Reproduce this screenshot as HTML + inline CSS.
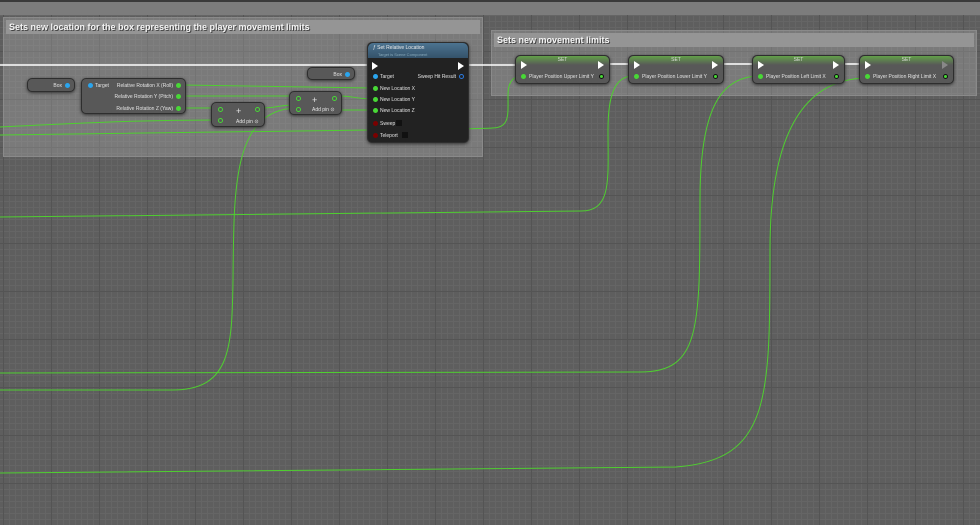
<!DOCTYPE html>
<html><head><meta charset="utf-8"><style>
*{margin:0;padding:0;box-sizing:border-box}
body{width:980px;height:525px;overflow:hidden;position:relative;font-family:"Liberation Sans",sans-serif;
background-color:#5e5e5e;
background-image:linear-gradient(to right,#545454 1px,transparent 1px),linear-gradient(to bottom,#545454 1px,transparent 1px),linear-gradient(to right,#656565 1px,transparent 1px),linear-gradient(to bottom,#656565 1px,transparent 1px);
background-size:48px 48px,48px 48px,6px 6px,6px 6px;background-position:3px 3px,3px 3px,3px 3px,3px 3px}
.topdark{position:absolute;left:0;top:0;width:980px;height:2px;background:#3a3a3a}
.topband{position:absolute;left:0;top:2px;width:980px;height:13px;background:#7c7c7c}
.cmt{position:absolute;background:rgba(190,190,190,.3);border:1px solid #8a8a8a}
.cmt .t{position:absolute;left:2px;right:2px;top:2px;height:14px;background:#959595;color:#f4f4f4;font-size:9px;font-weight:bold;line-height:14px;padding-left:3px;text-shadow:1px 1px 0 #444}
.node{position:absolute;background:#585858;border:1px solid #2e2e2e;border-radius:5px;box-shadow:0 1px 3px #333;color:#ddd;font-size:5px;}
.pin{position:absolute;width:5px;height:5px;border-radius:50%}
.g{background:#48d836}.b{background:#2aa5ee}
.lbl{position:absolute;white-space:nowrap;font-size:5px;color:#e4e4e4}
.exec{position:absolute;width:0;height:0;border-left:6px solid #fff;border-top:4px solid transparent;border-bottom:4px solid transparent}
.set .hd{position:absolute;left:0;right:0;top:0;height:9px;border-radius:5px 5px 0 0;background:linear-gradient(#62a048,#585858);text-align:center;color:#ddd;font-size:5px;line-height:9px}
</style></head><body>
<div class="topdark"></div><div class="topband"></div>
<div class="cmt" style="left:3px;top:17px;width:480px;height:140px"><div class="t">Sets new location for the box representing the player movement limits</div></div>
<div class="cmt" style="left:491px;top:30px;width:486px;height:66px"><div class="t">Sets new movement limits</div></div>

<svg width="980" height="525" style="position:absolute;left:0;top:0" fill="none">
<g stroke="#fff" stroke-width="1.5">
<path d="M0 65 L370 65"/><path d="M462 65 L520 65"/>
<path d="M604 64 L632 64"/><path d="M717 64 L760 64"/><path d="M840 64 L868 64"/>
</g>
<g stroke="#4fcf30" stroke-width="1">
<path d="M0 127 C100 122 150 120 217 120"/>
<path d="M0 135 C200 133 300 131 370 130 C420 129 480 129 492 128"/>
<path d="M182 85 L370 88"/>
<path d="M182 96 L290 96"/>
<path d="M182 108 L217 108"/>
<path d="M263 108 C275 108 280 105 296 105"/>
<path d="M340 96 C355 96 355 99 372 99"/>
<path d="M340 110 L372 110"/>
<path d="M0 390 L172 390 C230 390 232 350 233 280 C234 190 232 110 296 108"/>
<path d="M0 217 L581 211 C612 211 608 180 608 130 C608 95 615 76 633 76"/>
<path d="M492 128 C510 128 508 115 508 95 C508 80 515 76 522 76"/>
<path d="M0 373 L640 372 C700 372 700 330 700 200 C700 110 720 76 760 76"/>
<path d="M0 473 L676 467 C770 460 770 400 770 250 C770 140 800 78 868 78"/>
</g>
</svg>

<div class="node" style="left:27px;top:78px;width:48px;height:14px"><span class="lbl" style="right:12px;top:4px">Box</span><div class="pin b" style="right:4px;top:4px"></div></div>
<div class="node" style="left:81px;top:78px;width:105px;height:36px"><div class="pin b" style="left:6px;top:4px"></div><span class="lbl" style="left:13px;top:4px">Target</span>
<span class="lbl" style="right:12px;top:4px">Relative Rotation X (Roll)</span><div class="pin g" style="right:4px;top:4px"></div>
<span class="lbl" style="right:12px;top:15px">Relative Rotation Y (Pitch)</span><div class="pin g" style="right:4px;top:15px"></div>
<span class="lbl" style="right:12px;top:27px">Relative Rotation Z (Yaw)</span><div class="pin g" style="right:4px;top:27px"></div></div>
<div class="node" style="left:211px;top:102px;width:54px;height:25px"><div class="pin g" style="left:6px;top:4px;background:none;border:1px solid #48d836"></div><div class="pin g" style="left:6px;top:15px;background:none;border:1px solid #48d836"></div><div class="pin g" style="right:4px;top:4px;background:none;border:1px solid #48d836"></div><span class="lbl" style="left:24px;top:3px;font-size:9px">+</span><span class="lbl" style="left:24px;top:16px">Add pin ⊙</span></div>
<div class="node" style="left:289px;top:91px;width:53px;height:24px"><div class="pin g" style="left:6px;top:4px;background:none;border:1px solid #48d836"></div><div class="pin g" style="left:6px;top:15px;background:none;border:1px solid #48d836"></div><div class="pin g" style="right:4px;top:4px;background:none;border:1px solid #48d836"></div><span class="lbl" style="left:22px;top:3px;font-size:9px">+</span><span class="lbl" style="left:22px;top:15px">Add pin ⊙</span></div>
<div class="node" style="left:307px;top:67px;width:48px;height:13px"><span class="lbl" style="right:12px;top:4px">Box</span><div class="pin b" style="right:4px;top:4px"></div></div>

<div class="node" style="left:367px;top:42px;width:102px;height:101px;background:#222">
<div style="position:absolute;left:0;right:0;top:0;height:15px;background:linear-gradient(#4c7390,#34526a);border-radius:5px 5px 0 0"></div>
<span class="lbl" style="left:5px;top:2px;color:#eee">ƒ Set Relative Location</span><span class="lbl" style="left:10px;top:9px;color:#8ab;font-size:4px">Target is Scene Component</span>
<div class="exec" style="left:4px;top:19px"></div><div class="exec" style="right:4px;top:19px"></div>
<div class="pin b" style="left:5px;top:31px"></div><span class="lbl" style="left:12px;top:31px">Target</span>
<span class="lbl" style="right:12px;top:31px">Sweep Hit Result</span><div class="pin" style="right:4px;top:31px;border:1px solid #2a7ae0"></div>
<div class="pin g" style="left:5px;top:43px"></div><span class="lbl" style="left:12px;top:43px">New Location X</span>
<div class="pin g" style="left:5px;top:54px"></div><span class="lbl" style="left:12px;top:54px">New Location Y</span>
<div class="pin g" style="left:5px;top:65px"></div><span class="lbl" style="left:12px;top:65px">New Location Z</span>
<div class="pin" style="left:5px;top:78px;background:#7a0000"></div><span class="lbl" style="left:12px;top:78px">Sweep</span><div style="position:absolute;left:28px;top:77px;width:6px;height:6px;background:#111"></div>
<div class="pin" style="left:5px;top:90px;background:#7a0000"></div><span class="lbl" style="left:12px;top:90px">Teleport</span><div style="position:absolute;left:34px;top:89px;width:6px;height:6px;background:#111"></div>
</div>

<div class="node set" style="left:515px;top:55px;width:95px;height:29px"><div class="hd">SET</div><div class="exec" style="left:5px;top:5px"></div><div class="exec" style="right:5px;top:5px"></div><div class="pin g" style="left:5px;top:18px"></div><span class="lbl" style="left:13px;top:18px">Player Position Upper Limit Y</span><div class="pin g" style="right:5px;top:18px;border:1px solid #111"></div></div>
<div class="node set" style="left:628px;top:55px;width:96px;height:29px"><div class="hd">SET</div><div class="exec" style="left:5px;top:5px"></div><div class="exec" style="right:5px;top:5px"></div><div class="pin g" style="left:5px;top:18px"></div><span class="lbl" style="left:13px;top:18px">Player Position Lower Limit Y</span><div class="pin g" style="right:5px;top:18px;border:1px solid #111"></div></div>
<div class="node set" style="left:752px;top:55px;width:93px;height:29px"><div class="hd">SET</div><div class="exec" style="left:5px;top:5px"></div><div class="exec" style="right:5px;top:5px"></div><div class="pin g" style="left:5px;top:18px"></div><span class="lbl" style="left:13px;top:18px">Player Position Left Limit X</span><div class="pin g" style="right:5px;top:18px;border:1px solid #111"></div></div>
<div class="node set" style="left:859px;top:55px;width:95px;height:29px"><div class="hd">SET</div><div class="exec" style="left:5px;top:5px"></div><div class="exec" style="right:5px;top:5px;border-left-color:#888"></div><div class="pin g" style="left:5px;top:18px"></div><span class="lbl" style="left:13px;top:18px">Player Position Right Limit X</span><div class="pin g" style="right:5px;top:18px;border:1px solid #111"></div></div>
</body></html>
